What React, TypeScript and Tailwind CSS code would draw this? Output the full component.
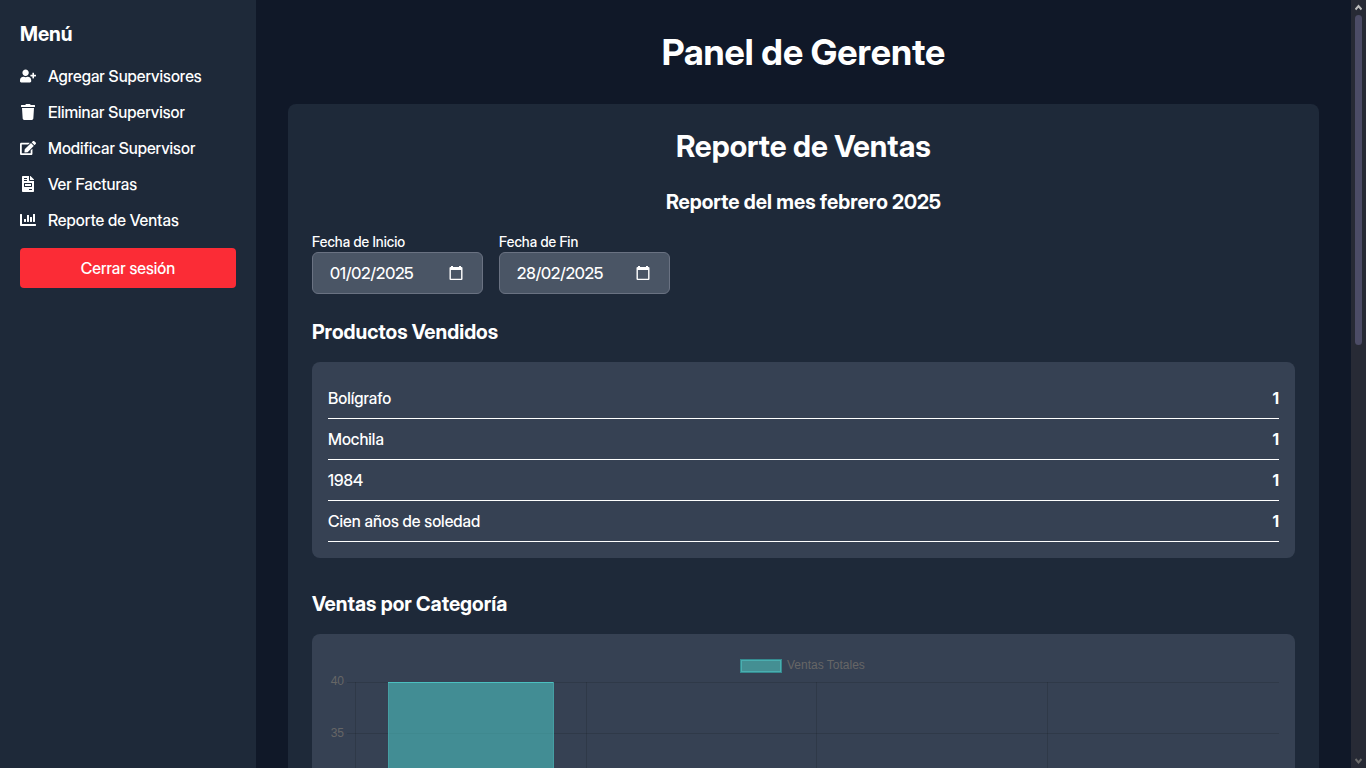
import { useId } from "react";
import type { IconType } from "react-icons";
import { FaUserPlus, FaTrash, FaEdit, FaFileInvoice, FaChartBar } from "react-icons/fa";

const menuItems: { label: string; icon: IconType }[] = [
  { label: "Agregar Supervisores", icon: FaUserPlus },
  { label: "Eliminar Supervisor", icon: FaTrash },
  { label: "Modificar Supervisor", icon: FaEdit },
  { label: "Ver Facturas", icon: FaFileInvoice },
  { label: "Reporte de Ventas", icon: FaChartBar },
];

const products = [
  { name: "Bolígrafo", sold: 1 },
  { name: "Mochila", sold: 1 },
  { name: "1984", sold: 1 },
  { name: "Cien años de soledad", sold: 1 },
];

function Sidebar() {
  return (
    <aside className="w-64 shrink-0 bg-gray-800 p-5">
      <h2 className="mb-4 text-xl font-bold">Menú</h2>
      <nav>
        <ul className="flex flex-col gap-3">
          {menuItems.map(({ label, icon: Icon }) => (
            <li key={label}>
              <a href="#" className="flex items-center gap-3 hover:text-gray-300">
                <Icon size={16} />
                {label}
              </a>
            </li>
          ))}
        </ul>
      </nav>
      <button type="button" className="mt-4 h-10 w-full rounded bg-red-500 hover:bg-red-600">
        Cerrar sesión
      </button>
    </aside>
  );
}

function DateField({ label, value }: { label: string; value: string }) {
  const id = useId();
  return (
    <div className="flex flex-col">
      <label htmlFor={id} className="text-sm">
        {label}
      </label>
      <div className="flex items-center rounded-md border border-gray-500 bg-gray-600 pr-4">
        <input
          id={id}
          type="text"
          inputMode="numeric"
          defaultValue={value}
          className="w-[133px] bg-transparent py-2 pl-[17px] outline-none"
        />
        <button type="button" aria-label={`Elegir ${label}`} className="flex w-5 justify-center">
          <svg width="14" height="16" viewBox="0 0 14 16" fill="currentColor" aria-hidden="true">
            <path
              fillRule="evenodd"
              d="M2 1h2v1h6V1h2v1h.5A1.100 1.100 0 0 1 13.500 3.100V13.900A1.100 1.100 0 0 1 12.400 15H1.600A1.100 1.100 0 0 1 .5 13.900V3.100A1.100 1.100 0 0 1 1.600 2H2V1ZM1.900 5v8.700h10.200V5H1.900Z"
            />
          </svg>
        </button>
      </div>
    </div>
  );
}

function SalesChart() {
  const ticks = [40, 35];
  const columns = [27.5, 258.5, 488.5, 719.5];
  return (
    <svg
      viewBox="0 0 951 475"
      className="block h-auto w-full font-['Liberation_Sans',Arial,sans-serif] text-xs font-normal"
      role="img"
      aria-label="Ventas por Categoría"
    >
      <rect x="412.500" y="9.500" width="41" height="13" fill="#448f93" stroke="#358a8f" />
      <rect x="413.500" y="10.500" width="39" height="11" fill="none" stroke="#4aaeb0" />
      <text x="459" y="19" fill="#666666">
        Ventas Totales
      </text>
      <g stroke="#000000" strokeOpacity="0.120">
        {ticks.map((tick, i) => (
          <line key={tick} x1="19" x2="951" y1={32.5 + i * 51} y2={32.5 + i * 51} />
        ))}
        {columns.map((x) => (
          <line key={x} x1={x} x2={x} y1="32" y2="449" />
        ))}
      </g>
      {ticks.map((tick, i) => (
        <text key={tick} x="16" y={35 + i * 52} textAnchor="end" fill="#666666">
          {tick}
        </text>
      ))}
      <rect x="60" y="32" width="166" height="409" fill="#4bc0c0" fillOpacity="0.600" />
      <path d="M60.500 441V32.500H225.500V441" fill="none" stroke="#4bc0c0" strokeOpacity="0.350" />
      <path d="M60 32.500H225" stroke="#4bc0c0" />
    </svg>
  );
}

function Scrollbar() {
  return (
    <div className="flex w-[15px] shrink-0 flex-col items-center bg-[#272a35]" aria-hidden="true">
      <svg width="7" height="15" viewBox="0 0 7 15" fill="none" stroke="#bdbdbd" strokeWidth="2">
        <path d="M.5 9.500 3.500 6 6.500 9.500" />
      </svg>
      <div className="h-[43%] w-[7px] rounded-full bg-[#4c4c66]" />
      <svg
        width="7"
        height="15"
        viewBox="0 0 7 15"
        fill="none"
        stroke="#6b6b6b"
        strokeWidth="2"
        className="mt-auto"
      >
        <path d="M.5 6 3.500 9.500 6.500 6" />
      </svg>
    </div>
  );
}

export default function App() {
  return (
    <div className="flex h-screen overflow-hidden bg-gray-900 font-['Inter_Display',Inter,sans-serif] font-medium text-white">
      <Sidebar />
      <main className="min-w-0 flex-1 overflow-y-auto p-8 [scrollbar-width:none]">
        <h1 className="mb-8 text-center text-4xl font-bold">Panel de Gerente</h1>
        <section className="rounded-lg bg-gray-800 p-6">
          <h2 className="mb-6 text-center text-3xl font-bold">Reporte de Ventas</h2>
          <h3 className="mb-4 text-center text-xl font-bold">Reporte del mes febrero 2025</h3>
          <div className="mb-6 flex gap-4">
            <DateField label="Fecha de Inicio" value="01/02/2025" />
            <DateField label="Fecha de Fin" value="28/02/2025" />
          </div>

          <h3 className="mb-4 text-xl font-bold">Productos Vendidos</h3>
          <ul className="mb-8 rounded-lg bg-gray-700 p-4">
            {products.map((product) => (
              <li key={product.name} className="flex justify-between border-b border-white py-2">
                <span>{product.name}</span>
                <span className="font-bold">{product.sold}</span>
              </li>
            ))}
          </ul>

          <h3 className="mb-4 text-xl font-bold">Ventas por Categoría</h3>
          <div className="rounded-lg bg-gray-700 p-4">
            <SalesChart />
          </div>
        </section>
      </main>
      <Scrollbar />
    </div>
  );
}
